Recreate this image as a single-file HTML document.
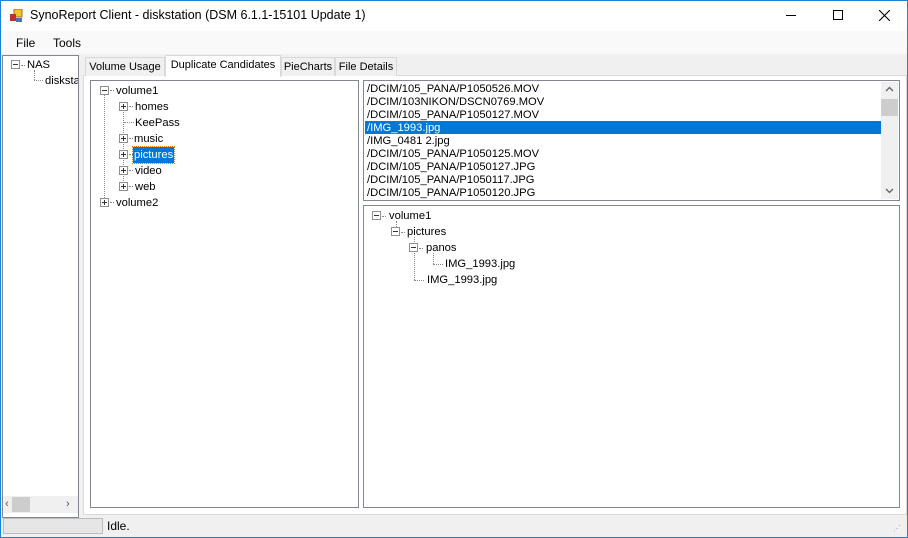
<!DOCTYPE html>
<html><head><style>
*{margin:0;padding:0;box-sizing:border-box}
body{width:908px;height:538px;background:#f0f0f0;font-family:"Liberation Sans",sans-serif;font-size:11.2px;color:#000;position:relative;overflow:hidden}
.a{position:absolute}
.t{position:absolute;white-space:nowrap;line-height:14px}
.box{position:absolute;background:#fff;border:1px solid #828790}
.pm{position:absolute;width:9px;height:9px;border:1px solid #8e8f8f;background:#fff}
.pm:before{content:"";position:absolute;left:1px;top:3px;width:5px;height:1px;background:#333}
.pm.p:after{content:"";position:absolute;left:3px;top:1px;width:1px;height:5px;background:#333}
.dv{position:absolute;border-left:1px dotted #888}
.dh{position:absolute;border-top:1px dotted #888}
.tab{position:absolute;top:57px;height:19px;border:1px solid #d9d9d9;border-bottom:none;background:#f0f0f0;padding:3px 0 0;text-align:center;white-space:nowrap;font-size:11px}
</style></head><body>
<div class="a" style="left:0;top:0;width:908px;height:31px;background:#fff"></div>
<div class="a" style="left:0;top:0;width:908px;height:1px;background:#1883d7"></div>
<div class="a" style="left:0;top:0;width:1px;height:538px;background:#1883d7"></div>
<div class="a" style="right:0;top:0;width:1px;height:538px;background:#1883d7"></div>
<div class="a" style="left:0;bottom:0;width:908px;height:1px;background:#1883d7"></div>
<svg class="a" style="left:9px;top:9px" width="14" height="14"><rect x="5" y="0" width="8" height="8" fill="#f4c430" stroke="#a07010"/><rect x="1" y="5" width="6" height="7" fill="#c03030"/><rect x="7" y="9" width="6" height="4" fill="#4a70c0"/></svg>
<div class="t" style="left:30px;top:8px;font-size:12.5px">SynoReport Client - diskstation (DSM 6.1.1-15101 Update 1)</div>
<div class="a" style="left:786px;top:15px;width:10px;height:1px;background:#000"></div>
<div class="a" style="left:833px;top:10px;width:10px;height:10px;border:1px solid #000"></div>
<svg class="a" style="left:879px;top:10px" width="11" height="11"><path d="M0 0L11 11M11 0L0 11" stroke="#000" stroke-width="1.1"/></svg>
<div class="a" style="left:1px;top:31px;width:906px;height:23px;background:#f9f9f9"></div>
<div class="t" style="left:16px;top:36px;font-size:12px">File</div>
<div class="t" style="left:53px;top:36px;font-size:12px">Tools</div>
<!-- left tree -->
<div class="a" style="left:2px;top:55px;width:77px;height:463px;background:#fff;border:1px solid #828790"></div>
<div class="pm" style="left:11px;top:60px"></div>
<div class="dh" style="left:21px;top:65px;width:4px"></div>
<div class="t" style="left:27px;top:58px">NAS</div>
<div class="dv" style="left:34px;top:70px;height:10px"></div>
<div class="dh" style="left:34px;top:80px;width:9px"></div>
<div class="t" style="left:45px;top:74px;width:33px;overflow:hidden">diskstation</div>
<div class="a" style="left:3px;top:496px;width:75px;height:17px;background:#f0f0f0"></div>
<div class="a" style="left:12px;top:497px;width:18px;height:15px;background:#cdcdcd"></div>
<div class="t" style="left:5px;top:497px;color:#555">‹</div>
<div class="t" style="left:66px;top:497px;color:#555">›</div>
<!-- tabs -->
<div class="a" style="left:83px;top:75px;width:824px;height:440px;border:1px solid #d9d9d9;background:#fff"></div>
<div class="a" style="left:85px;top:77px;width:820px;height:436px;background:#fff"></div>
<div class="tab" style="left:85px;width:80px">Volume Usage</div>
<div class="tab" style="left:281px;width:54px">PieCharts</div>
<div class="tab" style="left:335px;width:62px">File Details</div>
<div class="tab" style="left:165px;top:55px;height:22px;width:116px;background:#fff;padding-top:3px">Duplicate Candidates</div>
<div class="box" style="left:90px;top:80px;width:269px;height:428px"></div>
<div class="dv" style="left:104px;top:95px;height:107px"></div>
<div class="dv" style="left:123px;top:112px;height:75px"></div>
<div class="pm" style="left:100px;top:86px"></div><div class="dh" style="left:110px;top:90px;width:4px"></div><div class="t" style="left:116px;top:84px">volume1</div>
<div class="pm p" style="left:119px;top:102px"></div><div class="dh" style="left:129px;top:106px;width:4px"></div><div class="t" style="left:135px;top:100px">homes</div>
<div class="dh" style="left:124px;top:122px;width:10px"></div><div class="t" style="left:135px;top:116px">KeePass</div>
<div class="pm p" style="left:119px;top:134px"></div><div class="dh" style="left:129px;top:138px;width:4px"></div><div class="t" style="left:134px;top:132px">music</div>
<div class="pm p" style="left:119px;top:150px"></div><div class="dh" style="left:129px;top:154px;width:4px"></div><div class="t" style="left:133px;top:147px;background:#0078d7;color:#fff;padding:1px 1px;outline:1px dotted #e08000">pictures</div>
<div class="pm p" style="left:119px;top:166px"></div><div class="dh" style="left:129px;top:170px;width:4px"></div><div class="t" style="left:135px;top:164px">video</div>
<div class="pm p" style="left:119px;top:182px"></div><div class="dh" style="left:129px;top:186px;width:4px"></div><div class="t" style="left:135px;top:180px">web</div>
<div class="pm p" style="left:100px;top:198px"></div><div class="dh" style="left:110px;top:202px;width:4px"></div><div class="t" style="left:116px;top:196px">volume2</div>
<!-- list -->
<div class="box" style="left:363px;top:80px;width:537px;height:121px"></div>
<div class="a" style="left:881px;top:82px;width:17px;height:117px;background:#f0f0f0"></div>
<div class="a" style="left:881px;top:99px;width:17px;height:17px;background:#cdcdcd"></div>
<svg class="a" style="left:885px;top:86px" width="9" height="6"><path d="M1 5L4.5 1.5L8 5" stroke="#606060" fill="none" stroke-width="1.3"/></svg>
<svg class="a" style="left:885px;top:188px" width="9" height="6"><path d="M1 1L4.5 4.5L8 1" stroke="#606060" fill="none" stroke-width="1.3"/></svg>
<div class="a" style="left:365px;top:121px;width:516px;height:13px;background:#0078d7"></div>
<div class="t" style="left:367px;top:83px;line-height:13px">/DCIM/105_PANA/P1050526.MOV<br>/DCIM/103NIKON/DSCN0769.MOV<br>/DCIM/105_PANA/P1050127.MOV<br><span style="color:#fff">/IMG_1993.jpg</span><br>/IMG_0481 2.jpg<br>/DCIM/105_PANA/P1050125.MOV<br>/DCIM/105_PANA/P1050127.JPG<br>/DCIM/105_PANA/P1050117.JPG<br>/DCIM/105_PANA/P1050120.JPG</div>
<!-- lower tree -->
<div class="box" style="left:363px;top:205px;width:537px;height:303px"></div>
<div class="pm" style="left:372px;top:211px"></div><div class="dh" style="left:382px;top:216px;width:4px"></div><div class="t" style="left:389px;top:209px">volume1</div>
<div class="dv" style="left:396px;top:221px;height:6px"></div>
<div class="pm" style="left:391px;top:227px"></div><div class="dh" style="left:401px;top:232px;width:4px"></div><div class="t" style="left:407px;top:225px">pictures</div>
<div class="dv" style="left:414px;top:237px;height:43px"></div>
<div class="pm" style="left:409px;top:243px"></div><div class="dh" style="left:419px;top:248px;width:4px"></div><div class="t" style="left:426px;top:241px">panos</div>
<div class="dv" style="left:433px;top:253px;height:11px"></div><div class="dh" style="left:433px;top:264px;width:10px"></div><div class="t" style="left:445px;top:257px">IMG_1993.jpg</div>
<div class="dh" style="left:414px;top:280px;width:10px"></div><div class="t" style="left:427px;top:273px">IMG_1993.jpg</div>
<!-- status -->
<div class="a" style="left:3px;top:518px;width:100px;height:16px;background:#e6e6e6;border:1px solid #bcbcbc"></div>
<div class="t" style="left:107px;top:519px;font-size:12px">Idle.</div>
<div class="t" style="left:893px;top:522px;font-size:8px;color:#999;letter-spacing:-1px">⋰</div>
</body></html>
